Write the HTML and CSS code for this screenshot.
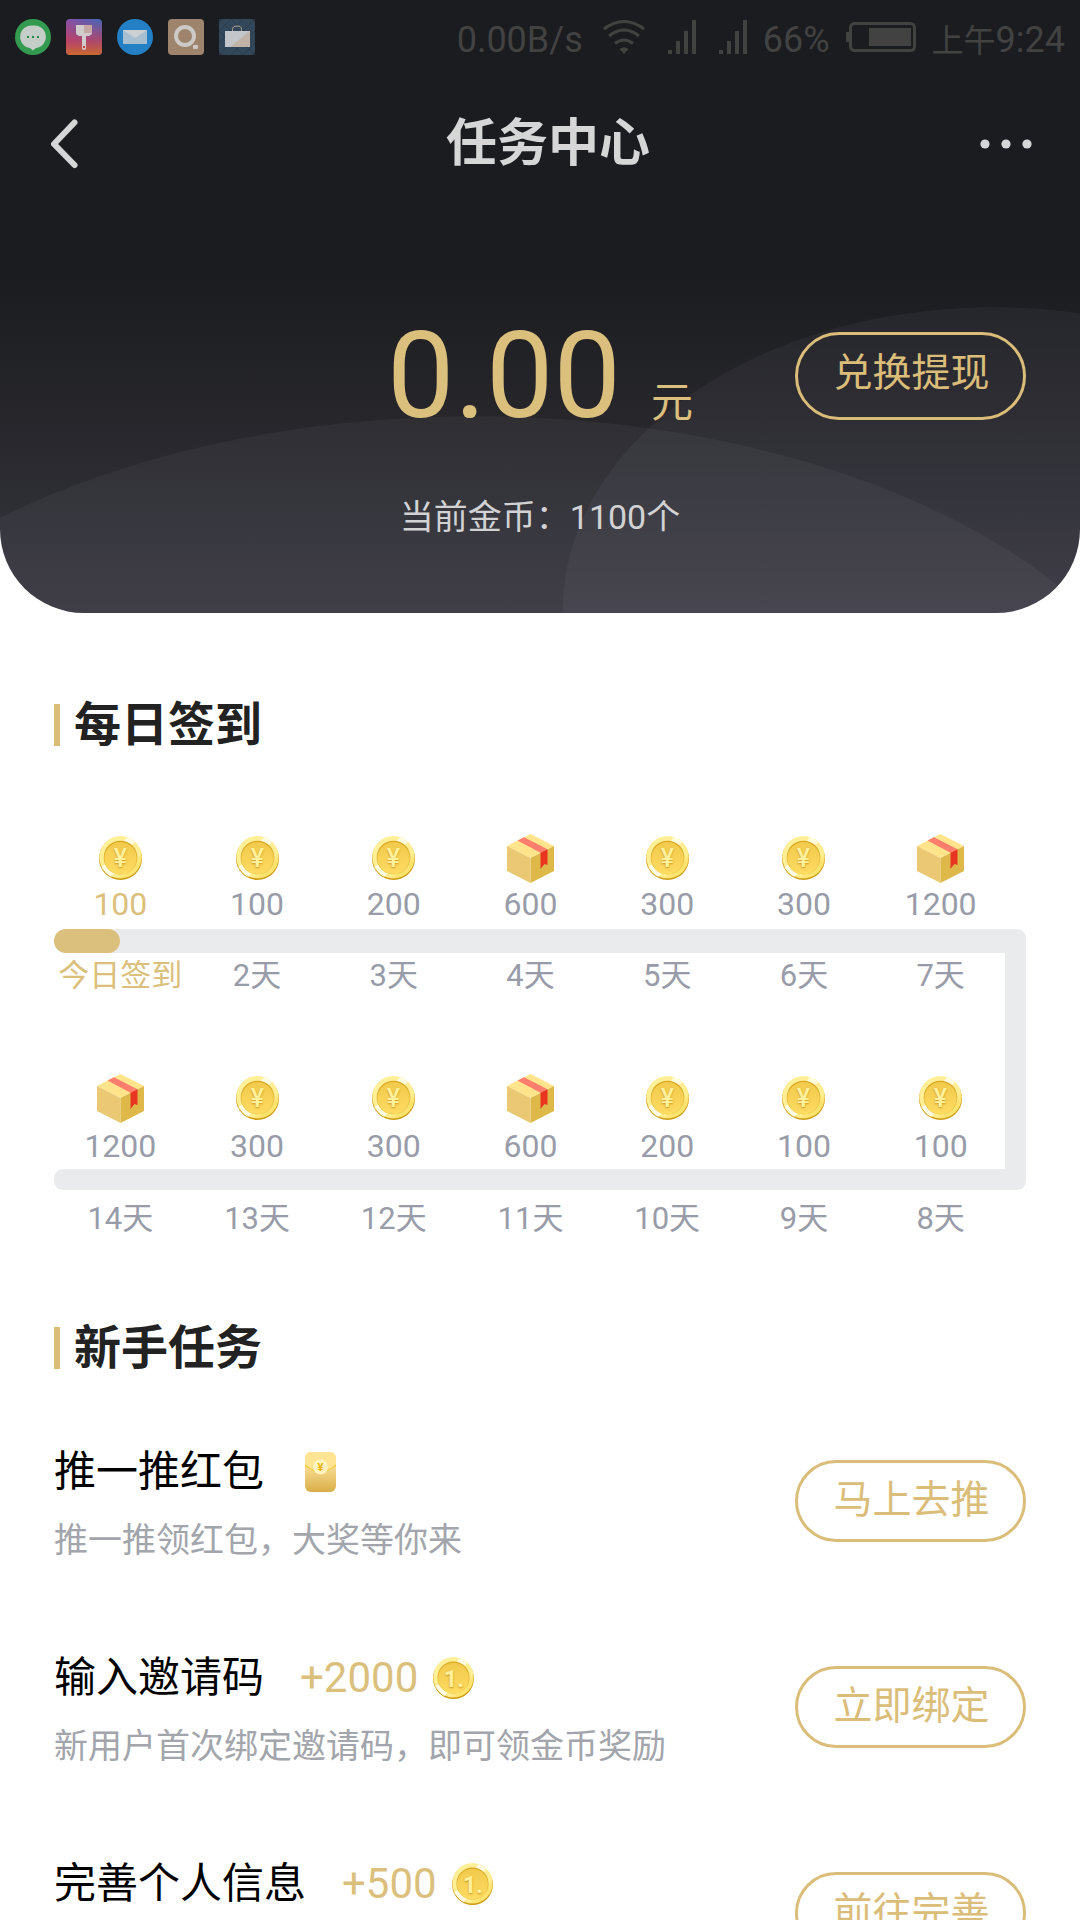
FILE: index.html
```
<!DOCTYPE html>
<html lang="zh-CN">
<head>
    <meta charset="UTF-8">
    <meta name="viewport" content="width=device-width, initial-scale=1.0">
    <title>任务中心</title>
    <link rel="stylesheet" href="styles.css">
</head>
<body>
    <!-- Shared icons -->
    <svg class="sprite" aria-hidden="true">
        <defs>
            <linearGradient id="rim" x1="0" y1="0" x2="1" y2="1">
                <stop offset="0" stop-color="#fff09a"/>
                <stop offset="0.68" stop-color="#ffed92"/>
                <stop offset="0.78" stop-color="#fce26c"/>
                <stop offset="1" stop-color="#ffe878"/>
            </linearGradient>
            <linearGradient id="face" x1="0" y1="0" x2="0" y2="1">
                <stop offset="0" stop-color="#f1ca4c"/>
                <stop offset="1" stop-color="#fedb62"/>
            </linearGradient>
            <linearGradient id="packet" x1="0" y1="0" x2="0" y2="1">
                <stop offset="0.3" stop-color="#fbe09a"/>
                <stop offset="1" stop-color="#d9ae48"/>
            </linearGradient>
            <clipPath id="rim-clip"><circle cx="21.5" cy="21.5" r="21.5"/></clipPath>
        </defs>
        <symbol id="coin" viewBox="0 0 43 44">
            <circle cx="21.5" cy="22.5" r="21.5" fill="#cc9a10"/>
            <circle cx="21.5" cy="21.2" r="21.2" fill="url(#rim)"/>
            <g clip-path="url(#rim-clip)" fill="#fffbe0">
                <path d="M29 0L36 6L32 10L24 6Z"/>
                <path d="M2 31L7 28L16 37L11 42Z"/>
            </g>
            <circle cx="21.5" cy="21.5" r="16.8" fill="#dba820"/>
            <circle cx="21.5" cy="22.2" r="16.2" fill="url(#face)"/>
        </symbol>
        <symbol id="box" viewBox="0 0 47 49">
            <path d="M23.500 0L47 12L23.500 24L0 12Z" fill="#ffe48c"/>
            <path d="M0 12L23.500 24V49L0 37Z" fill="#ebc974"/>
            <path d="M47 12L23.500 24V49L47 37Z" fill="#deb94a"/>
            <path d="M10.500 6.500L17 3.300L40.500 15.300L33.500 18.800Z" fill="#ff7e6d"/>
            <path d="M33.500 18.800L40.500 15.300V31L37.500 30L33.500 35Z" fill="#e83522"/>
        </symbol>
        <symbol id="signal" viewBox="0 0 28 34">
            <path d="M0 30h4v4h-4zM8 21h4v13h-4zM16 11h4v23h-4zM24 0h4v34h-4z" fill="#424242"/>
        </symbol>
    </svg>

    <div class="page">
        <header class="hero">
            <div class="status-bar">
                <div class="app-icons">
                    <svg width="36" height="36" viewBox="0 0 36 36">
                        <circle cx="18" cy="18" r="18" fill="#329b50"/>
                        <path d="M18 6.500a11.300 11.300 0 0 1 3 22.500l-3 2.500l-3-2.500a11.300 11.300 0 0 1 3-22.500z" fill="#c4cdc8"/>
                        <path d="M12 17h2v2h-2zM17 17h2v2h-2zM22 17h2v2h-2z" fill="#268c44"/>
                    </svg>
                    <svg width="36" height="36" viewBox="0 0 36 36">
                        <defs>
                            <linearGradient id="paint-a" x1="0" y1="0" x2="1" y2="0">
                                <stop offset="0" stop-color="#8750a8"/>
                                <stop offset="1" stop-color="#4268b8"/>
                            </linearGradient>
                            <linearGradient id="paint-b" x1="0" y1="0" x2="0" y2="1">
                                <stop offset="0" stop-color="#c83c5c" stop-opacity="0"/>
                                <stop offset="0.6" stop-color="#c4405c" stop-opacity="0.8"/>
                                <stop offset="1" stop-color="#cc6a2c"/>
                            </linearGradient>
                        </defs>
                        <rect width="36" height="36" rx="4" fill="url(#paint-a)"/>
                        <rect width="36" height="36" rx="4" fill="url(#paint-b)"/>
                        <path d="M10 6h16v9l-3 2h-3v12a2 2 0 0 1-4 0v-12h-3l-3-2z" fill="#d0cccc"/>
                        <path d="M18 6h8v8h-8z" fill="#c8a8a4"/>
                        <path d="M17 27h2v2h-2z" fill="#c8403c"/>
                    </svg>
                    <svg width="36" height="36" viewBox="0 0 36 36">
                        <circle cx="18" cy="18" r="18" fill="#2380c4"/>
                        <path d="M6 11h24v14h-24z" fill="#a8bfd2"/>
                        <path d="M6 11h24l-12 8z" fill="#ccd0d2"/>
                    </svg>
                    <svg width="36" height="36" viewBox="0 0 36 36">
                        <rect width="36" height="36" rx="4" fill="#9e846c"/>
                        <circle cx="17" cy="17" r="9" fill="none" stroke="#ccc9c6" stroke-width="4"/>
                        <rect x="25" y="26" width="5" height="4" rx="1" fill="#ccc9c6"/>
                    </svg>
                    <svg width="36" height="36" viewBox="0 0 36 36">
                        <rect width="36" height="36" rx="4" fill="#33475a"/>
                        <path d="M0 12L12 0M0 24L24 0M0 36L36 0M12 36L36 12M24 36L36 24M0 12L24 36M0 0L36 36M12 0L36 24" stroke="#2b3c4d" stroke-width="1"/>
                        <path d="M13.500 12v-1.500a4.500 3.500 0 0 1 9 0v1.500" fill="none" stroke="#b0a890" stroke-width="1"/>
                        <path d="M6 12h25v16h-25z" fill="#c3c6ca"/>
                        <path d="M31 12v16h-20z" fill="#c0b4a8"/>
                    </svg>
                </div>
                <div class="system-info">
                    <span>0.00B/s</span>
                    <svg class="wifi" width="42" height="34" viewBox="0 0 42 34" fill="none" stroke="#424242" stroke-width="3">
                        <path d="M1 9Q21 -6 41 9M6 16Q21 4 36 16M12 23.500Q21 16.500 30 23.500"/>
                        <path d="M16.500 29Q21 25.500 25.500 29L21 34Z" fill="#424242" stroke="none"/>
                    </svg>
                    <svg class="signal" width="28" height="34"><use href="#signal"/></svg>
                    <svg class="signal" width="28" height="34"><use href="#signal"/></svg>
                    <span>66%</span>
                    <svg class="battery" width="70" height="30" viewBox="0 0 70 30">
                        <path d="M0 10h4v10h-4z" fill="#424242"/>
                        <rect x="4.500" y="1.500" width="64" height="27" rx="4" fill="none" stroke="#424242" stroke-width="3"/>
                        <path d="M23 6h42v18h-42z" fill="#424242"/>
                    </svg>
                    <span><small>上午</small>9:24</span>
                </div>
            </div>

            <nav class="nav-bar">
                <button class="back" aria-label="返回">
                    <svg width="36" height="54" viewBox="0 0 36 54"><path d="M26.500 5.500L6 27L26.500 48" fill="none" stroke="#d6d6d8" stroke-width="6" stroke-linecap="round" stroke-linejoin="round"/></svg>
                </button>
                <h1>任务中心</h1>
                <button class="more" aria-label="更多">
                    <svg width="52" height="10" viewBox="0 0 52 10" fill="#d6d6d8"><circle cx="5" cy="5" r="4.600"/><circle cx="26" cy="5" r="4.600"/><circle cx="47" cy="5" r="4.600"/></svg>
                </button>
            </nav>

            <div class="balance">
                <p class="amount">0.00<span class="unit">元</span></p>
                <button class="pill">兑换提现</button>
            </div>
            <p class="coins">当前金币：1100个</p>
        </header>

        <main>
            <section class="check-in">
                <h2>每日签到</h2>
                <div class="days icons">
                    <svg class="coin" viewBox="0 0 43 44"><use href="#coin"/><text x="21.500" y="31">¥</text></svg>
                    <svg class="coin" viewBox="0 0 43 44"><use href="#coin"/><text x="21.500" y="31">¥</text></svg>
                    <svg class="coin" viewBox="0 0 43 44"><use href="#coin"/><text x="21.500" y="31">¥</text></svg>
                    <svg class="box"><use href="#box"/></svg>
                    <svg class="coin" viewBox="0 0 43 44"><use href="#coin"/><text x="21.500" y="31">¥</text></svg>
                    <svg class="coin" viewBox="0 0 43 44"><use href="#coin"/><text x="21.500" y="31">¥</text></svg>
                    <svg class="box"><use href="#box"/></svg>
                </div>
                <div class="days values">
                    <span class="today">100</span><span>100</span><span>200</span><span>600</span><span>300</span><span>300</span><span>1200</span>
                </div>
                <!-- The track runs along the first week, turns and comes back under the second -->
                <div class="track">
                    <div class="progress"></div>
                </div>
                <div class="turn">
                    <div class="days labels">
                        <span class="today">今日签到</span><span>2天</span><span>3天</span><span>4天</span><span>5天</span><span>6天</span><span>7天</span>
                    </div>
                    <div class="days icons">
                        <svg class="box"><use href="#box"/></svg>
                        <svg class="coin" viewBox="0 0 43 44"><use href="#coin"/><text x="21.500" y="31">¥</text></svg>
                        <svg class="coin" viewBox="0 0 43 44"><use href="#coin"/><text x="21.500" y="31">¥</text></svg>
                        <svg class="box"><use href="#box"/></svg>
                        <svg class="coin" viewBox="0 0 43 44"><use href="#coin"/><text x="21.500" y="31">¥</text></svg>
                        <svg class="coin" viewBox="0 0 43 44"><use href="#coin"/><text x="21.500" y="31">¥</text></svg>
                        <svg class="coin" viewBox="0 0 43 44"><use href="#coin"/><text x="21.500" y="31">¥</text></svg>
                    </div>
                    <div class="days values">
                        <span>1200</span><span>300</span><span>300</span><span>600</span><span>200</span><span>100</span><span>100</span>
                    </div>
                </div>
                <div class="track track-back"></div>
                <div class="days labels">
                    <span>14天</span><span>13天</span><span>12天</span><span>11天</span><span>10天</span><span>9天</span><span>8天</span>
                </div>
            </section>

            <section class="tasks">
                <h2>新手任务</h2>
                <div class="task">
                    <div class="task-info">
                        <h3>推一推红包
                            <svg class="packet" width="36" height="42" viewBox="0 0 36 42">
                                <rect x="3" y="1" width="31" height="40" rx="6" fill="url(#packet)"/>
                                <path d="M3 13L18 21L34 13V15L18 24L3 15Z" fill="#f3c836"/>
                                <path d="M3 7a6 6 0 0 1 6-6h19a6 6 0 0 1 6 6v6Q27 20 18.500 20Q10 20 3 13z" fill="#ffe593"/>
                                <circle cx="18.500" cy="16" r="7.500" fill="#fff3c0"/>
                                <text x="18.500" y="20">¥</text>
                            </svg>
                        </h3>
                        <p>推一推领红包，大奖等你来</p>
                    </div>
                    <button class="pill">马上去推</button>
                </div>
                <div class="task">
                    <div class="task-info">
                        <h3>输入邀请码 <span class="reward">+2000</span> <svg class="coin" viewBox="0 0 43 44"><use href="#coin"/><text x="22" y="31">1.</text></svg></h3>
                        <p>新用户首次绑定邀请码，即可领金币奖励</p>
                    </div>
                    <button class="pill">立即绑定</button>
                </div>
                <div class="task">
                    <div class="task-info">
                        <h3>完善个人信息 <span class="reward">+500</span> <svg class="coin" viewBox="0 0 43 44"><use href="#coin"/><text x="22" y="31">1.</text></svg></h3>
                    </div>
                    <button class="pill">前往完善</button>
                </div>
            </section>
        </main>
    </div>
</body>
</html>
```
FILE: styles.css
```
* {
    box-sizing: border-box;
}
body {
    margin: 0;
    background: #fff;
    color: #000;
    font-family: Roboto, "Noto Sans CJK SC", sans-serif;
}
h1, h2, h3, p {
    margin: 0;
}
button {
    padding: 0;
    border: none;
    background: none;
    font-family: inherit;
    cursor: pointer;
}
svg {
    display: block;
    flex: none;
}
.sprite {
    position: absolute;
    width: 0;
    height: 0;
}
.page {
    height: 100vh;
    overflow: hidden;
}

/* Hero */
.hero {
    padding-bottom: 71px;
    border-radius: 0 0 84px 84px;
    background:
        radial-gradient(714px 400px at 44% 816px, rgba(255, 255, 255, 0.04) 99.8%, transparent 100%),
        radial-gradient(431px 302px at 92% 609px, rgba(225, 220, 255, 0.045) 99.8%, transparent 100%),
        linear-gradient(#1b1c20 45%, #26262b 68%, #383741 100%);
}
.status-bar {
    display: flex;
    align-items: center;
    justify-content: space-between;
    height: 74px;
    padding: 0 15px;
}
.app-icons {
    display: flex;
    gap: 15px;
}
.system-info {
    display: flex;
    align-items: center;
    color: #424242;
    font-size: 36px;
    line-height: 42px;
}
.system-info span {
    padding-top: 6px;
}
.system-info small {
    font-size: 32px;
}
.wifi {
    margin-left: 20px;
}
.signal {
    margin-left: 23px;
}
.signal + span {
    margin-left: 16px;
}
.battery {
    margin: 0 16px;
}
.nav-bar {
    display: flex;
    align-items: center;
    height: 140px;
    padding: 0 48px;
}
.nav-bar h1 {
    flex: 1;
    color: #d6d6d8;
    font-size: 51px;
    font-weight: 700;
    line-height: 74px;
    text-align: center;
}
.back {
    width: 68px;
}
.balance {
    display: grid;
    grid-template-columns: 1fr auto 1fr;
    align-items: center;
    margin-top: 92px;
    padding: 0 54px;
}
.amount {
    grid-column: 2;
    color: #dbbf7c;
    font-size: 120px;
    line-height: 140px;
}
.unit {
    margin-left: 30px;
    font-size: 42px;
    line-height: 1;
}
.coins {
    margin-top: 46px;
    color: #d2d2d4;
    font-size: 34px;
    line-height: 50px;
    text-align: center;
}
.pill {
    flex: none;
    width: 231px;
    height: 82px;
    padding: 0 0 2px 2px;
    border: 3px solid #dbbd7a;
    border-radius: 44px;
    color: #dbbd7a;
    font-size: 39px;
    line-height: 56px;
}
.balance .pill {
    justify-self: end;
    height: 88px;
    padding-bottom: 6px;
}

/* Sections */
main {
    padding: 0 54px;
}
h2 {
    display: flex;
    align-items: center;
    gap: 14px;
    color: #222;
    font-size: 47px;
    font-weight: 700;
    line-height: 68px;
}
h2::before {
    content: "";
    width: 6px;
    height: 42px;
    background: #dbbd7a;
}

/* Daily check-in */
.check-in {
    padding-top: 78px;
}
.days {
    display: grid;
    grid-template-columns: repeat(7, 1fr);
    justify-items: center;
    align-items: center;
    margin: 0 17px 0 -2px;
    color: #989ca8;
}
.icons {
    height: 50px;
}
h2 + .icons {
    margin-top: 74px;
}
.coin {
    width: 43px;
    height: 44px;
}
.coin text {
    fill: #fff09c;
    font-size: 25px;
    font-weight: 500;
    text-anchor: middle;
    text-shadow: 0 1px 2px #c9951c;
}
.box {
    width: 47px;
    height: 49px;
}
.values {
    font-size: 32px;
    line-height: 46px;
}
.check-in > .values {
    padding-bottom: 4px;
    line-height: 42px;
}
.labels {
    font-size: 31px;
    line-height: 46px;
}
.today {
    color: #dbbf7c;
}
.track {
    height: 24px;
    border-radius: 12px 9px 0 12px;
    background: #eaebed;
}
.track-back {
    height: 21px;
    border-radius: 9px 0 9px 9px;
}
.progress {
    width: 66px;
    height: 24px;
    border-radius: 12px;
    background: #dbbf7c;
}
.turn {
    border-right: 21px solid #eaebed;
}
.turn .days {
    margin-right: -4px;
}
.turn .icons {
    margin-top: 74px;
}
.track-back + .labels {
    margin-top: 6px;
}

/* Tasks */
.tasks {
    padding-top: 72px;
}
.task {
    display: flex;
    align-items: flex-start;
    justify-content: space-between;
    height: 206px;
}
h2 + .task {
    margin-top: 59px;
}
.task h3 {
    display: flex;
    align-items: center;
    font-size: 42px;
    font-weight: 400;
    line-height: 62px;
}
.task p {
    margin-top: 12px;
    color: #a2a5ab;
    font-size: 34px;
    line-height: 50px;
}
.task .pill {
    margin-top: 19px;
}
.task .coin {
    width: 41px;
    height: 42px;
    margin-left: 15px;
}
.task .coin text {
    font-weight: 700;
}
.reward {
    margin-left: 36px;
    color: #dbbf7c;
}
.packet {
    margin-left: 38px;
}
.packet text {
    fill: #f0b400;
    font-size: 11px;
    font-weight: 700;
    text-anchor: middle;
}
```
